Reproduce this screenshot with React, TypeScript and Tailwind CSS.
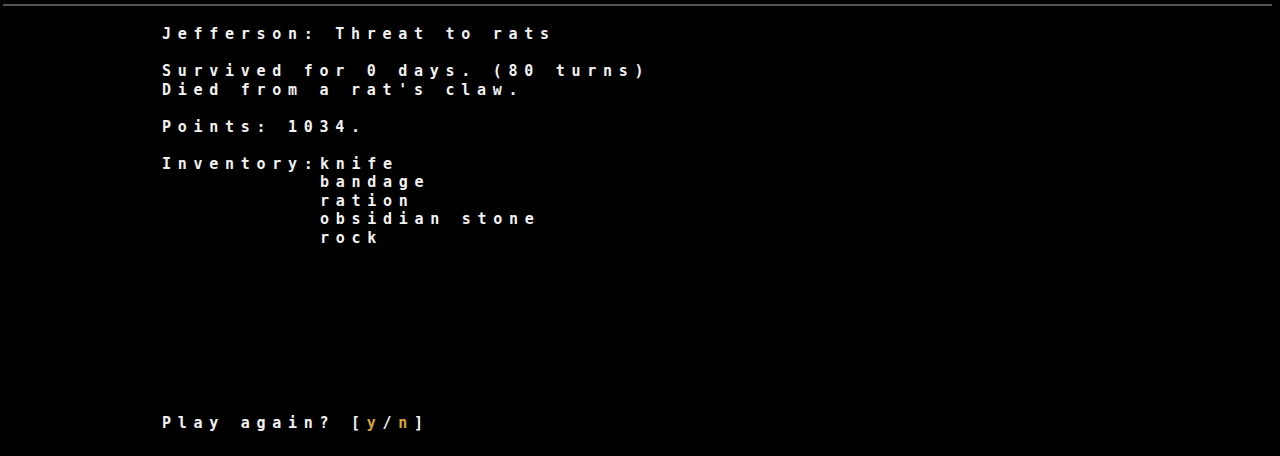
const inventory = ["knife", "bandage", "ration", "obsidian stone", "rock"];

function Line({ children }: { children?: React.ReactNode }) {
  return <div className="h-[18.5px] whitespace-pre">{children}</div>;
}

export default function App() {
  return (
    <div className="h-[456px] w-[1280px] bg-black overflow-hidden">
      <div className="pt-[4px] pl-[3px] pr-[8px]">
        <div className="h-[2px] bg-[#555555]" />
      </div>

      <div
        className="pl-[162px] pt-[19px] text-[15px] font-bold leading-[18.5px] tracking-[6.72px] text-[#f2f2f2]"
        style={{ fontFamily: '"DejaVu Sans Mono", "Liberation Mono", monospace' }}
      >
        <Line>Jefferson: Threat to rats</Line>
        <Line />
        <Line>Survived for 0 days. (80 turns)</Line>
        <Line>Died from a rat's claw.</Line>
        <Line />
        <Line>Points: 1034.</Line>
        <Line />
        <div className="flex">
          <div className="w-[158px] shrink-0">Inventory:</div>
          <div className="flex flex-col">
            {inventory.map((item) => (
              <Line key={item}>{item}</Line>
            ))}
          </div>
        </div>
        {Array.from({ length: 9 }).map((_, i) => (
          <Line key={i} />
        ))}
        <Line>
          Play again? [<span className="text-[#d9a23c]">y</span>/
          <span className="text-[#d9a23c]">n</span>]
        </Line>
      </div>
    </div>
  );
}
